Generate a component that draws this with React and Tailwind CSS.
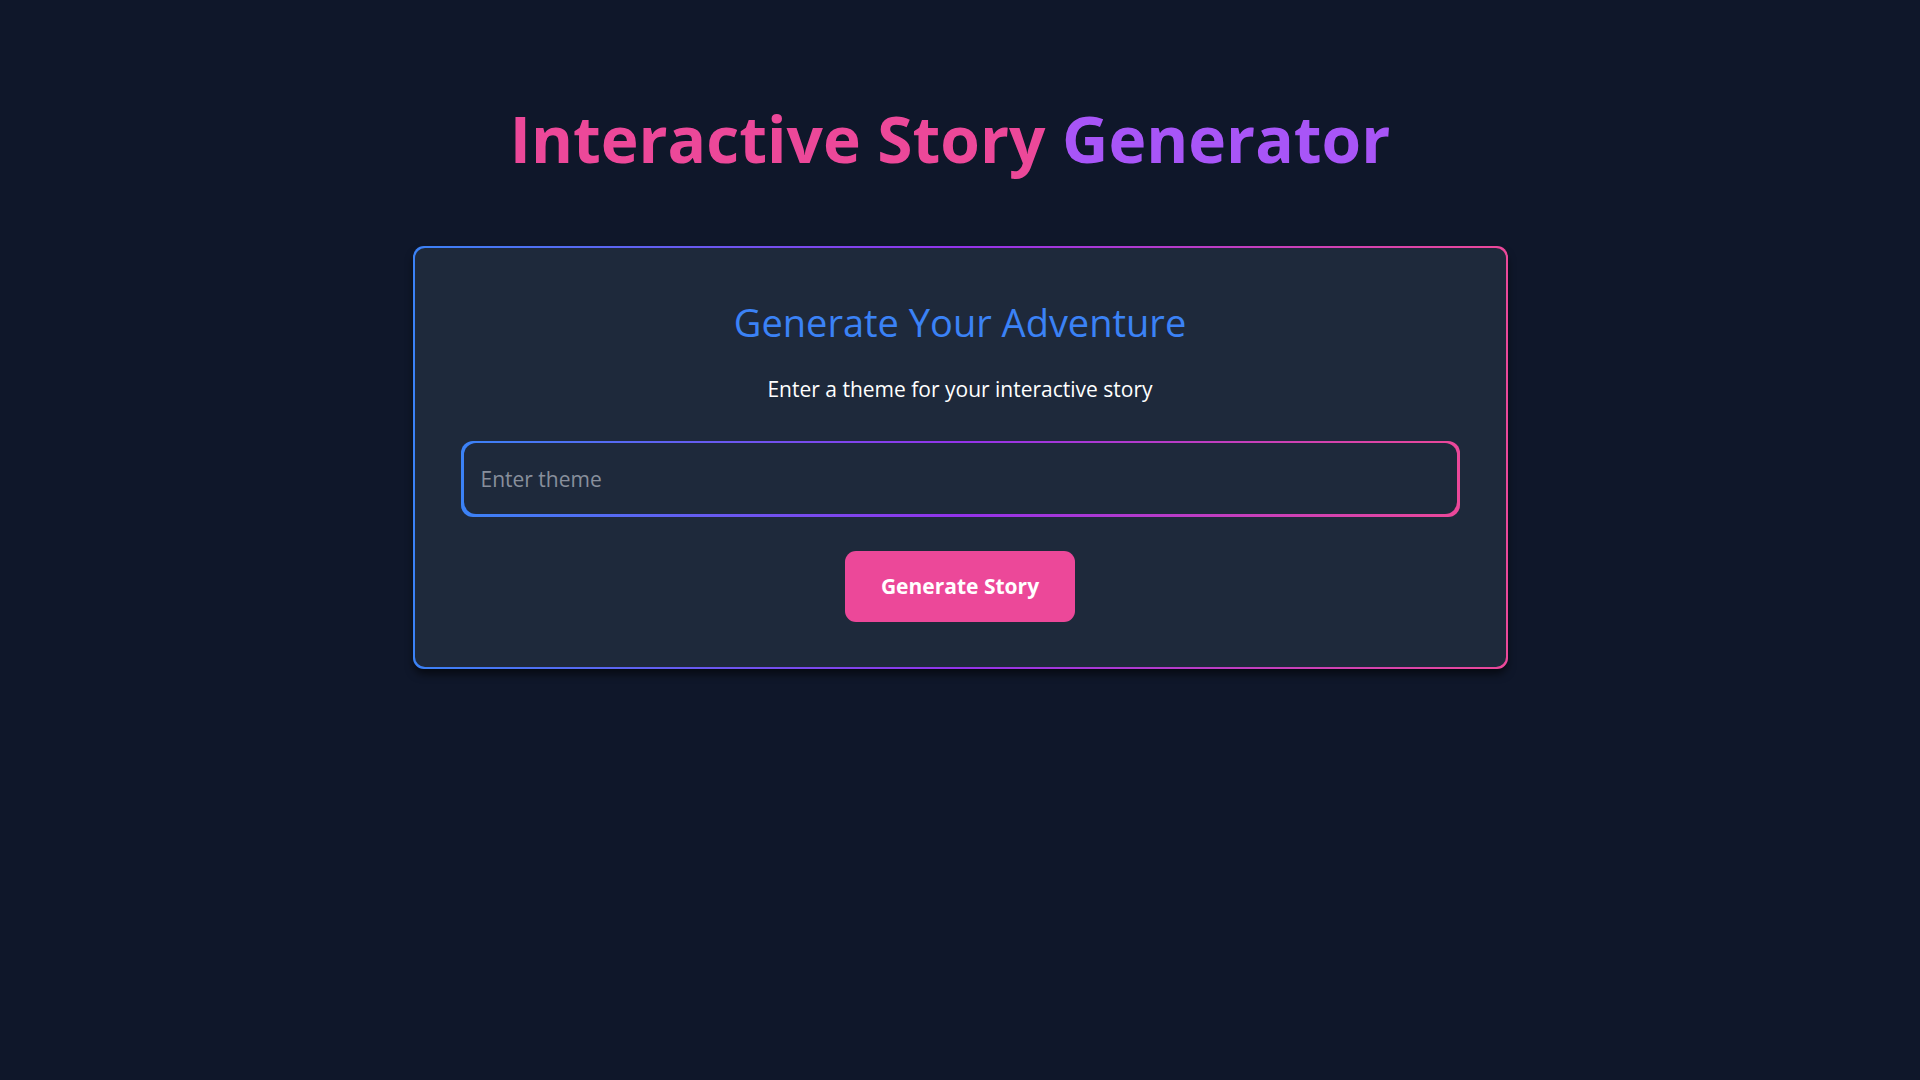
export default function App() {
  return (
    <main className="flex min-h-screen flex-col items-center bg-[#0f172a] px-6 pt-[101px] pb-12 font-['Open_Sans','Noto_Sans',sans-serif] text-[21px] leading-8 text-white">
      <h1 className="mb-[69px] pr-5 text-center text-[64px] leading-[76px] font-bold text-[#ec4899]">
        Interactive Story <span className="text-[#a855f7]">Generator</span>
      </h1>

      <section className="w-full max-w-[1095px] rounded-[11px] bg-[linear-gradient(to_right,#3b82f6,#9333ea,#ec4899)] p-[2px] shadow-[0_6px_9px_-1px_rgba(0,0,0,0.6)]">
        <form
          className="flex flex-col items-center rounded-[10px] bg-[#1e293b] px-[46px] pt-11 pb-[45px]"
          onSubmit={(event) => event.preventDefault()}
        >
          <h2 className="mb-[21px] text-center text-[38px] leading-[60px] text-[#3b82f6]">
            Generate Your Adventure
          </h2>
          <label htmlFor="theme" className="mb-9 text-center">
            Enter a theme for your interactive story
          </label>
          <div className="w-full rounded-[12px] bg-[linear-gradient(to_right,#3b82f6,#9333ea,#ec4899)] p-[3px] pt-[2px]">
            <input
              id="theme"
              type="text"
              placeholder="Enter theme"
              className="block h-[71px] w-full rounded-[12px] bg-[#1e293b] px-[17px] text-white outline-none placeholder:text-[#888f9c]"
            />
          </div>
          <button
            type="submit"
            className="mt-[34px] rounded-[11px] bg-[#ec4899] px-9 py-[19px] leading-[33px] font-bold hover:bg-[#db2777]"
          >
            Generate Story
          </button>
        </form>
      </section>
    </main>
  );
}
